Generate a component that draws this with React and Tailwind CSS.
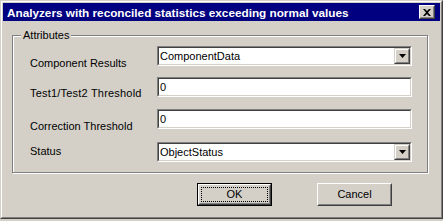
function Sunken({ children, className = "" }) {
  return (
    <div className={"border border-[#808080] border-r-white border-b-white " + className}>
      <div className="h-full border border-[#404040] border-r-[#d4d0c8] border-b-[#d4d0c8] bg-white flex items-center">
        {children}
      </div>
    </div>
  );
}

function DropButton() {
  return (
    <div className="w-[16px] h-full border border-[#d4d0c8] border-r-[#404040] border-b-[#404040]">
      <div className="h-full border border-white border-r-[#808080] border-b-[#808080] bg-[#d4d0c8] flex items-center justify-center">
        <svg width="7" height="4" viewBox="0 0 7 4">
          <path d="M0 0H7L3.5 4Z" fill="#000" />
        </svg>
      </div>
    </div>
  );
}

function Combo({ value }) {
  return (
    <Sunken className="w-[255px] h-[20px]">
      <span className="flex-1 pl-[1px] leading-[13px] whitespace-nowrap">{value}</span>
      <DropButton />
    </Sunken>
  );
}

function TextBox({ value }) {
  return (
    <Sunken className="w-[255px] h-[20px]">
      <span className="flex-1 pl-[1px] leading-[13px]">{value}</span>
    </Sunken>
  );
}

function Row({ label, labelPad, mt, children }) {
  return (
    <div className={"flex h-[20px] " + mt}>
      <div className={"w-[127px] whitespace-nowrap leading-[13px] " + labelPad}>{label}</div>
      {children}
    </div>
  );
}

export default function App() {
  return (
    <div className="w-[443px] h-[221px] bg-[#d4d0c8] font-['Liberation_Sans',Arial,sans-serif] text-[11px] text-black">
      <div className="h-[219px] border border-[#d4d0c8] border-r-[#404040] border-b-[#404040]">
        <div className="h-full border border-white border-r-[#808080] border-b-[#808080] p-px flex flex-col">
          <div className="h-[18px] bg-[#000080] flex items-center pl-[4px] pr-[5px]">
            <span className="flex-1 text-white font-bold text-[11.75px] leading-[13px] whitespace-nowrap">
              Analyzers with reconciled statistics exceeding normal values
            </span>
            <div className="w-[16px] h-[14px] border border-white border-r-[#404040] border-b-[#404040]">
              <div className="h-full border border-[#d4d0c8] border-r-[#808080] border-b-[#808080] bg-[#d4d0c8] flex items-center justify-center">
                <svg width="8" height="7" viewBox="0 0 8 7">
                  <path d="M0 0h2l2 2 2-2h2L5 3.5 8 7H6L4 5 2 7H0l3-3.5z" fill="#000" />
                </svg>
              </div>
            </div>
          </div>
          <div className="flex-1 px-[9px] pt-[14px]">
            <div className="relative w-[416px] h-[138px] border border-[#808080] shadow-[1px_1px_0_#ffffff,inset_1px_1px_0_#ffffff] pl-[17px] pt-[10px]">
              <span className="absolute left-[8px] top-[-7px] px-[2px] bg-[#d4d0c8] leading-[13px]">Attributes</span>
              <Row label="Component Results" labelPad="pt-[11px]" mt="">
                <Combo value="ComponentData" />
              </Row>
              <Row label="Test1/Test2 Threshold" labelPad="pt-[10px] tracking-[0.2px]" mt="mt-[11px]">
                <TextBox value="0" />
              </Row>
              <Row label="Correction Threshold" labelPad="pt-[11px]" mt="mt-[12px]">
                <TextBox value="0" />
              </Row>
              <Row label="Status" labelPad="pt-[3px]" mt="mt-[13px]">
                <Combo value="ObjectStatus" />
              </Row>
            </div>
            <div className="flex mt-[10px] pl-[185px] gap-[45px]">
              <div className="w-[75px] h-[23px] border border-black">
                <div className="h-full border border-white border-r-[#404040] border-b-[#404040]">
                  <div className="h-full border border-[#d4d0c8] border-r-[#808080] border-b-[#808080] p-[1px]">
                    <div className="h-full border border-dotted border-black flex items-center justify-center leading-[13px]">
                      OK
                    </div>
                  </div>
                </div>
              </div>
              <div className="w-[75px] h-[23px] border border-white border-r-[#404040] border-b-[#404040]">
                <div className="h-full border border-[#d4d0c8] border-r-[#808080] border-b-[#808080] flex items-center justify-center leading-[13px]">
                  Cancel
                </div>
              </div>
            </div>
          </div>
        </div>
      </div>
    </div>
  );
}
